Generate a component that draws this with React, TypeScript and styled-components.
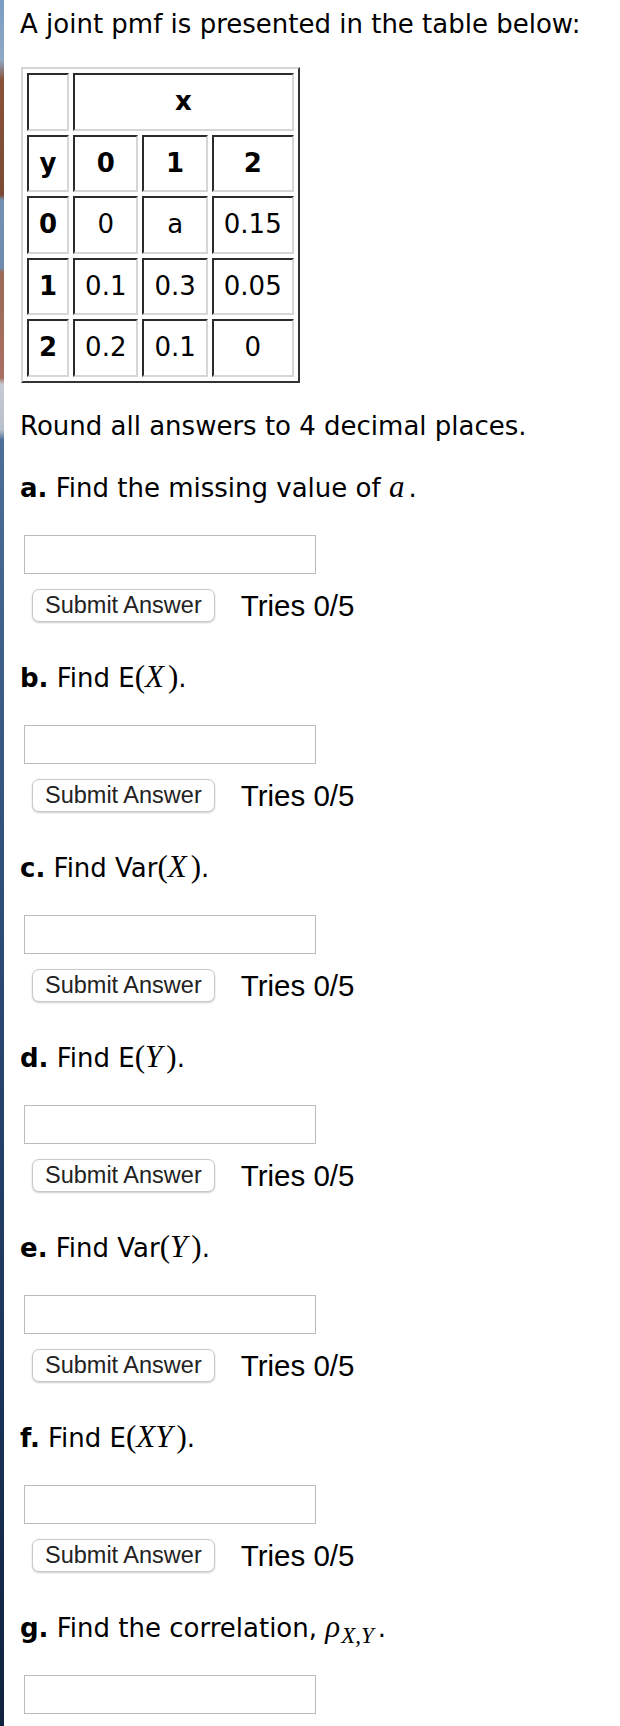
import React from "react";
import styled, { createGlobalStyle } from "styled-components";

const GlobalStyle = createGlobalStyle`
  html, body {
    margin: 0;
    padding: 0;
    background: #ffffff;
  }
  body {
    font-family: "DejaVu Sans", Verdana, sans-serif;
    color: #000;
  }
`;

const Page = styled.div`
  display: flex;
  min-height: 1726px;
`;

// sliver of the desktop wallpaper visible at the left edge
const Wallpaper = styled.div`
  flex: 0 0 4px;
  background: linear-gradient(
    to bottom,
    #7a9cc4 0px,
    #8fa8c4 60px,
    #8a5238 80px,
    #7c4a34 195px,
    #7391b2 200px,
    #6f8cae 268px,
    #9c6858 272px,
    #a87062 378px,
    #c6cbd4 384px,
    #b8c0cc 430px,
    #4c6e98 440px,
    #2e4d78 900px,
    #1a3258 1400px,
    #10223e 1726px
  );
`;

const Content = styled.main`
  flex: 1;
  padding-left: 16px;
`;

const Intro = styled.p`
  margin: 8px 0 0;
  font-size: 26px;
  line-height: 32px;
`;

const PmfTable = styled.table`
  margin: 27px 0 0 1px;
  border-collapse: separate;
  border-spacing: 4px;
  border: 2px solid;
  border-color: #d6d6d6 #333333 #333333 #d6d6d6;
`;

const Cell = styled.td<{ $bold?: boolean }>`
  border: 2px solid;
  border-color: #2b2b2b #d6d6d6 #d6d6d6 #2b2b2b;
  padding: 10px;
  text-align: center;
  font-size: 26px;
  line-height: 33.6px;
  font-weight: ${(p) => (p.$bold ? 700 : 400)};
`;

const Note = styled.p`
  margin: 27px 0 0;
  font-size: 26px;
  line-height: 32px;
`;

const Question = styled.section`
  display: flex;
  flex-direction: column;
  align-items: flex-start;
  margin-top: 29px;

  & + & {
    margin-top: 38px;
  }
`;

const Prompt = styled.p`
  margin: 0;
  font-size: 26px;
  line-height: 32px;
  white-space: nowrap;
`;

const Label = styled.b`
  font-weight: 700;
`;

const Math = styled.span`
  font-family: "Liberation Serif", "Times New Roman", serif;
  font-style: italic;
  font-size: 31px;
  margin-right: 4px;
`;

const Paren = styled.span`
  font-family: "Liberation Serif", "Times New Roman", serif;
  font-style: normal;
  font-size: 31px;
`;

const Sub = styled.sub`
  font-size: 23px;
  vertical-align: -6px;
  line-height: 0;
  margin-left: 1px;
`;

const AnswerInput = styled.input`
  display: block;
  box-sizing: border-box;
  width: 292px;
  height: 39px;
  margin: 31px 0 0 4px;
  border: 1px solid #bcbcbc;
  background: #fff;
  font-size: 22px;
`;

const SubmitRow = styled.div`
  display: flex;
  align-items: center;
  gap: 26px;
  margin: 15px 0 0 12px;
`;

const SubmitButton = styled.button`
  box-sizing: border-box;
  height: 33px;
  padding: 0 12px;
  border: 1px solid #c9c9c9;
  border-radius: 7px;
  background: #fff;
  box-shadow: 0 1px 2px rgba(0, 0, 0, 0.2);
  font-family: "Liberation Sans", Arial, sans-serif;
  font-size: 23.5px;
  color: #222;
`;

const Tries = styled.span`
  font-family: "Liberation Sans", Arial, sans-serif;
  font-size: 29.5px;
`;

const rows = [
  { y: "0", values: ["0", "a", "0.15"] },
  { y: "1", values: ["0.1", "0.3", "0.05"] },
  { y: "2", values: ["0.2", "0.1", "0"] },
];

const questions: { label: string; body: React.ReactNode }[] = [
  {
    label: "a.",
    body: (
      <>
        Find the missing value of <Math>a</Math>.
      </>
    ),
  },
  {
    label: "b.",
    body: (
      <>
        Find E<Paren>(</Paren>
        <Math>X</Math>
        <Paren>)</Paren>.
      </>
    ),
  },
  {
    label: "c.",
    body: (
      <>
        Find Var<Paren>(</Paren>
        <Math>X</Math>
        <Paren>)</Paren>.
      </>
    ),
  },
  {
    label: "d.",
    body: (
      <>
        Find E<Paren>(</Paren>
        <Math>Y</Math>
        <Paren>)</Paren>.
      </>
    ),
  },
  {
    label: "e.",
    body: (
      <>
        Find Var<Paren>(</Paren>
        <Math>Y</Math>
        <Paren>)</Paren>.
      </>
    ),
  },
  {
    label: "f.",
    body: (
      <>
        Find E<Paren>(</Paren>
        <Math>XY</Math>
        <Paren>)</Paren>.
      </>
    ),
  },
  {
    label: "g.",
    body: (
      <>
        Find the correlation,{" "}
        <Math>
          ρ<Sub>X,Y</Sub>
        </Math>
        .
      </>
    ),
  },
];

export default function App() {
  return (
    <>
      <GlobalStyle />
      <Page>
        <Wallpaper />
        <Content>
          <Intro>A joint pmf is presented in the table below:</Intro>

          <PmfTable>
            <tbody>
              <tr>
                <Cell />
                <Cell $bold colSpan={3}>
                  x
                </Cell>
              </tr>
              <tr>
                <Cell $bold>y</Cell>
                <Cell $bold>0</Cell>
                <Cell $bold>1</Cell>
                <Cell $bold>2</Cell>
              </tr>
              {rows.map(({ y, values }) => (
                <tr key={y}>
                  <Cell $bold>{y}</Cell>
                  {values.map((v, i) => (
                    <Cell key={i}>{v}</Cell>
                  ))}
                </tr>
              ))}
            </tbody>
          </PmfTable>

          <Note>Round all answers to 4 decimal places.</Note>

          {questions.map(({ label, body }) => (
            <Question key={label}>
              <Prompt>
                <Label>{label}</Label> {body}
              </Prompt>
              <AnswerInput type="text" />
              <SubmitRow>
                <SubmitButton type="button">Submit Answer</SubmitButton>
                <Tries>Tries 0/5</Tries>
              </SubmitRow>
            </Question>
          ))}
        </Content>
      </Page>
    </>
  );
}
